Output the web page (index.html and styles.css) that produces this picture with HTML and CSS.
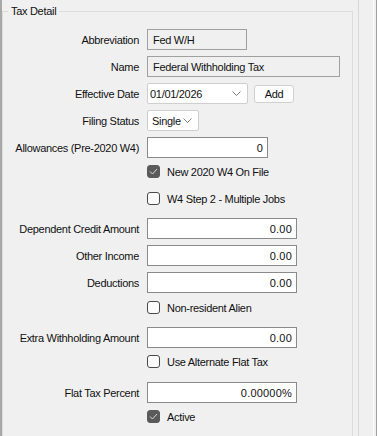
FILE: index.html
```html
<!DOCTYPE html>
<html lang="en">
<head>
    <meta charset="UTF-8">
    <meta name="viewport" content="width=device-width, initial-scale=1.0">
    <title>Tax Detail</title>
    <link rel="stylesheet" href="styles.css">
</head>
<body>

    <div class="window">
        <fieldset class="group">
            <legend>Tax Detail</legend>

            <div class="form">
                <label class="lbl">Abbreviation</label>
                <div class="ctl"><input class="box readonly w-abbr" type="text" value="Fed W/H" readonly></div>

                <label class="lbl">Name</label>
                <div class="ctl"><input class="box readonly w-name" type="text" value="Federal Withholding Tax" readonly></div>

                <label class="lbl">Effective Date</label>
                <div class="ctl">
                    <div class="combo w-date">
                        <span>01/01/2026</span>
                        <svg class="chev" width="9" height="5" viewBox="0 0 9 5"><path d="M0.5 0.5 L4.5 4.5 L8.5 0.5" fill="none" stroke="#707070" stroke-width="0.9"/></svg>
                    </div>
                    <button class="btn">Add</button>
                </div>

                <label class="lbl">Filing Status</label>
                <div class="ctl">
                    <div class="combo w-status">
                        <span>Single</span>
                        <svg class="chev" width="9" height="5" viewBox="0 0 9 5"><path d="M0.5 0.5 L4.5 4.5 L8.5 0.5" fill="none" stroke="#707070" stroke-width="0.9"/></svg>
                    </div>
                </div>

                <label class="lbl">Allowances (Pre-2020 W4)</label>
                <div class="ctl"><input class="box num w-allow" type="text" value="0"></div>

                <span></span>
                <div class="check-row">
                    <span class="check on"><svg width="9" height="7" viewBox="0 0 9 7"><path d="M1 3.5 L3.5 6 L8 1" fill="none" stroke="#d8d8d8" stroke-width="1"/></svg></span>
                    New 2020 W4 On File
                </div>

                <span></span>
                <div class="check-row"><span class="check"></span>W4 Step 2 - Multiple Jobs</div>

                <label class="lbl">Dependent Credit Amount</label>
                <div class="ctl"><input class="box num w-amt" type="text" value="0.00"></div>

                <label class="lbl">Other Income</label>
                <div class="ctl"><input class="box num w-amt" type="text" value="0.00"></div>

                <label class="lbl">Deductions</label>
                <div class="ctl"><input class="box num w-amt" type="text" value="0.00"></div>

                <span class="nudge"></span>
                <div class="check-row nudge"><span class="check"></span>Non-resident Alien</div>

                <label class="lbl">Extra Withholding Amount</label>
                <div class="ctl"><input class="box num w-amt" type="text" value="0.00"></div>

                <span></span>
                <div class="check-row"><span class="check"></span>Use Alternate Flat Tax</div>

                <label class="lbl nudge">Flat Tax Percent</label>
                <div class="ctl nudge"><input class="box num w-amt" type="text" value="0.00000%"></div>

                <span></span>
                <div class="check-row">
                    <span class="check on"><svg width="9" height="7" viewBox="0 0 9 7"><path d="M1 3.5 L3.5 6 L8 1" fill="none" stroke="#d8d8d8" stroke-width="1"/></svg></span>
                    Active
                </div>
            </div>
        </fieldset>

        <div class="splitter"></div>
        <div class="edge"></div>
    </div>

</body>
</html>
```

FILE: styles.css
```css
body {
    font-family: "Liberation Sans", Arial, sans-serif;
    font-size: 11px;
    letter-spacing: -0.3px;
    color: #111;
    margin: 0;
    padding: 0;
    height: 100vh;
    overflow: hidden;
    background-color: #f0f0f0;
}

.window {
    display: flex;
    height: 100%;
    border-left: 2px solid #a8a8a8;
}

.group {
    box-sizing: border-box;
    width: 351px;
    height: 480px;
    margin: 4px 0 0 0;
    padding: 0;
    border: 1px solid #dcdcdc;
    flex-shrink: 0;
}

.group legend {
    margin-left: 5px;
    padding: 0 3px;
    line-height: 14px;
}

.form {
    display: grid;
    grid-template-columns: 136px 1fr;
    column-gap: 8px;
    padding-top: 5px;
}

.lbl {
    height: 27px;
    padding-top: 6px;
    box-sizing: border-box;
    display: flex;
    align-items: center;
    justify-content: flex-end;
    white-space: nowrap;
}

.ctl {
    height: 27px;
    padding-top: 6px;
    box-sizing: border-box;
    display: flex;
    align-items: center;
    gap: 6px;
}

.nudge {
    margin-top: 1px;
}

.box {
    box-sizing: border-box;
    height: 21px;
    margin: 0;
    padding: 0 4px 0 5px;
    border: 1px solid #8a8a8a;
    border-radius: 0;
    background-color: #fff;
    font-family: inherit;
    font-size: 11px;
    letter-spacing: -0.3px;
    color: #111;
    outline: none;
}

.readonly {
    background-color: #f0f0f0;
    border-color: #a0a0a0;
}

.num {
    text-align: right;
    letter-spacing: 0.2px;
}

.w-abbr { width: 100px; }
.w-name { width: 193px; }
.w-allow { width: 121px; }
.w-amt { width: 150px; }

.combo {
    box-sizing: border-box;
    height: 21px;
    display: flex;
    align-items: center;
    justify-content: space-between;
    padding: 0 6px 0 2px;
    background-color: #fff;
    border: 1px solid #cfcfcf;
    border-radius: 2px;
}

.w-date { width: 101px; }
.w-status { width: 52px; padding-left: 4px; }

.chev {
    display: block;
}

.btn {
    box-sizing: border-box;
    width: 40px;
    height: 18px;
    padding: 0;
    font-family: inherit;
    font-size: 11px;
    letter-spacing: -0.3px;
    background-color: #fdfdfd;
    border: 1px solid #d0d0d0;
    border-radius: 3px;
    color: #111;
}

.check-row {
    height: 27px;
    display: flex;
    align-items: center;
    gap: 7px;
    white-space: nowrap;
}

.check {
    box-sizing: border-box;
    width: 13px;
    height: 13px;
    border: 1px solid #4a4a4a;
    border-radius: 3px;
    background-color: #fbfbfb;
    display: flex;
    align-items: center;
    justify-content: center;
}

.check.on {
    background-color: #5a5a5a;
    border-color: #5a5a5a;
}

.splitter {
    width: 14px;
    margin-left: 5px;
    border-left: 1px solid #d8d8d8;
}

.edge {
    width: 2px;
    border-left: 1px solid #fcfcfc;
    border-right: 1px solid #a0a0a0;
}
```
